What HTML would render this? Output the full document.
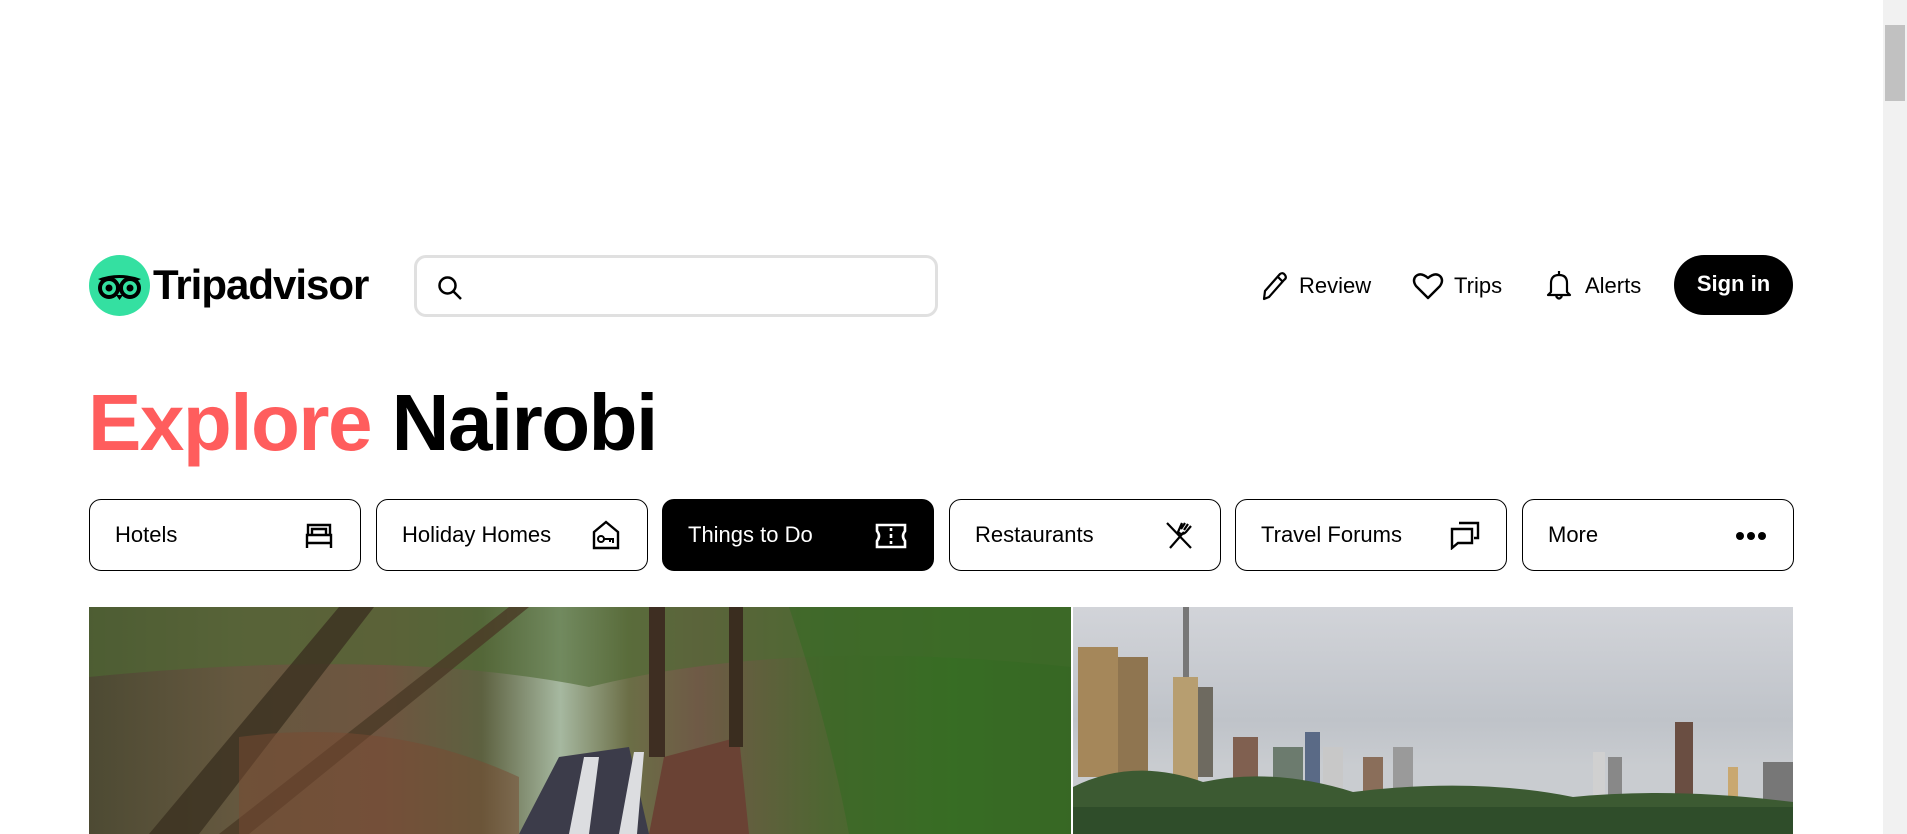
<!DOCTYPE html>
<html><head><meta charset="utf-8"><style>
*{box-sizing:border-box;margin:0;padding:0}
html,body{width:1907px;height:834px;overflow:hidden;background:#fff;font-family:"Liberation Sans",sans-serif;color:#000}
.abs{position:absolute}
.logo{left:89px;top:255px;width:61px;height:61px;border-radius:50%;background:#34e0a1}
.brand{left:153px;top:260px;font-size:42px;font-weight:bold;letter-spacing:-1px;line-height:50px}
.search{left:414px;top:255px;width:524px;height:62px;border:3px solid #e0e0e0;border-radius:12px}
.nav{top:272px;font-size:22px;line-height:28px}
.signin{left:1674px;top:255px;width:119px;height:60px;border-radius:30px;background:#000;color:#fff;font-size:22px;font-weight:bold;text-align:center;line-height:58px}
h1{position:absolute;left:88px;top:378px;font-size:80px;font-weight:bold;letter-spacing:-1.5px;line-height:90px}
h1 span{color:#ff5d5d}
.tab{top:499px;width:272px;height:72px;border:1px solid #000;border-radius:12px;font-size:22px;line-height:70px;padding-left:25px}
.tab svg{position:absolute;right:26px;top:23px}
.tab.on{background:#000;color:#fff}
.sb{left:1883px;top:0;width:24px;height:834px;background:#f1f1f1}
.th{left:1885px;top:25px;width:20px;height:76px;background:#c1c1c1}
</style></head><body>
<div class="abs logo">
<svg width="61" height="61" viewBox="0 0 61 61"><circle cx="20" cy="33" r="9" fill="none" stroke="#000" stroke-width="4"/><circle cx="41" cy="33" r="9" fill="none" stroke="#000" stroke-width="4"/><circle cx="20" cy="33" r="3.5"/><circle cx="41" cy="33" r="3.5"/><path d="M9 24 Q30 16 52 24 L48 26 Q30 20 13 26Z"/><path d="M27 40 L30.5 45 L34 40Z"/></svg>
</div>
<div class="abs brand">Tripadvisor</div>
<div class="abs search"><svg style="position:absolute;left:20px;top:17px" width="26" height="26" viewBox="0 0 26 26"><circle cx="10.5" cy="10.5" r="8" fill="none" stroke="#000" stroke-width="2.5"/><path d="M16.5 16.5L24 24" stroke="#000" stroke-width="2.5"/></svg></div>
<svg class="abs" style="left:1259px;top:270px" width="30" height="32" viewBox="0 0 30 32"><path d="M5 29 L6 21 L21 4 Q24 2 26 5 Q28 8 25 10 L10 27Z M19 7 L24 12" fill="none" stroke="#000" stroke-width="2.2" stroke-linejoin="round"/></svg>
<div class="abs nav" style="left:1299px">Review</div>
<svg class="abs" style="left:1412px;top:272px" width="32" height="28" viewBox="0 0 32 28"><path d="M16 26 L4 14 Q0 8 4 4 Q9 0 16 6 Q23 0 28 4 Q32 8 28 14Z" fill="none" stroke="#000" stroke-width="2.4" stroke-linejoin="round"/></svg>
<div class="abs nav" style="left:1454px">Trips</div>
<svg class="abs" style="left:1545px;top:268px" width="28" height="34" viewBox="0 0 28 34"><path d="M14 3 L14 6 M6 24 L6 15 Q6 7 14 7 Q22 7 22 15 L22 24 L25 27 L3 27Z M11 28 Q14 33 17 28" fill="none" stroke="#000" stroke-width="2.2" stroke-linejoin="round"/></svg>
<div class="abs nav" style="left:1585px">Alerts</div>
<div class="abs signin">Sign in</div>
<h1><span>Explore</span> Nairobi</h1>

<div class="abs tab" style="left:89px">Hotels<svg width="30" height="26" viewBox="0 0 30 26"><path d="M4 2 H26 V12 H4Z M3 12 H27 V20 H3Z M3 20 V25 M27 20 V25 M8 6 H22 V12 H8Z" fill="none" stroke="#000" stroke-width="2.4"/></svg></div>
<div class="abs tab" style="left:376px">Holiday Homes<svg width="30" height="30" viewBox="0 0 30 30" style="top:20px"><path d="M3 12 L15 2 L27 12 V28 H3Z" fill="none" stroke="#000" stroke-width="2.4"/><circle cx="10" cy="19" r="3" fill="none" stroke="#000" stroke-width="2"/><path d="M13 19 H22 V23 M19 19 V22" fill="none" stroke="#000" stroke-width="2"/></svg></div>
<div class="abs tab on" style="left:662px">Things to Do<svg width="32" height="26" viewBox="0 0 32 26"><path d="M2 2 H30 V8 Q26 13 30 18 V24 H2 V18 Q6 13 2 8Z" fill="none" stroke="#fff" stroke-width="2.6"/><path d="M16 5 V8 M16 11 V15 M16 18 V21" stroke="#fff" stroke-width="2.6"/></svg></div>
<div class="abs tab" style="left:949px">Restaurants<svg width="30" height="30" viewBox="0 0 30 30" style="top:20px"><path d="M3 3 L27 28 M6 28 L20 12 M18 3 L14 12 Q18 16 22 12 L27 6 M21 3 L17 9 M24 4 L20 10" fill="none" stroke="#000" stroke-width="2.2"/></svg></div>
<div class="abs tab" style="left:1235px">Travel Forums<svg width="30" height="30" viewBox="0 0 30 30" style="top:20px"><path d="M9 3 H28 V18 H24 M2 9 H22 V23 H8 L2 28Z" fill="none" stroke="#000" stroke-width="2.4"/></svg></div>
<div class="abs tab" style="left:1522px">More<svg width="32" height="10" viewBox="0 0 32 10" style="top:31px"><circle cx="5" cy="5" r="4"/><circle cx="16" cy="5" r="4"/><circle cx="27" cy="5" r="4"/></svg></div>

<div class="abs" style="left:89px;top:607px;width:982px;height:227px;overflow:hidden;background:linear-gradient(90deg,#4d4a33 0%,#65583f 15%,#6f5540 30%,#5d6140 40%,#a6b8a0 48%,#6b6e46 55%,#6f5a46 62%,#4f6632 75%,#3f6f28 88%,#3f6528 100%)">
<svg width="982" height="227" viewBox="0 0 982 227">
<path d="M0 0 H982 V60 Q700 30 500 80 Q300 40 0 70Z" fill="#4f6a33" opacity=".6"/>
<path d="M60 227 L250 0 L285 0 L110 227Z" fill="#3b3120" opacity=".8"/>
<path d="M130 227 L420 0 L440 0 L160 227Z" fill="#4a3a26" opacity=".8"/>
<path d="M430 227 L470 150 L540 140 L560 227Z" fill="#3c3c4a"/>
<path d="M480 227 L495 150 L510 150 L500 227Z M530 227 L545 145 L555 145 L548 227Z" fill="#dcdde0"/>
<path d="M560 227 L575 150 L650 130 L660 227Z" fill="#6a4234"/>
<path d="M150 130 Q300 110 430 170 L430 227 L150 227Z" fill="#7a4a32" opacity=".5"/>
<rect x="560" y="0" width="16" height="150" fill="#3e2e22"/>
<rect x="640" y="0" width="14" height="140" fill="#3a2d1f"/>
<path d="M700 0 H982 V227 H760 Q740 120 700 0Z" fill="#2f6a1e" opacity=".45"/>
</svg></div>

<div class="abs" style="left:1073px;top:607px;width:720px;height:227px;overflow:hidden;background:linear-gradient(180deg,#d2d4d9 0%,#bfc3c9 50%,#c9ccd0 70%)">
<svg width="720" height="227" viewBox="0 0 720 227">
<rect x="5" y="40" width="40" height="130" fill="#a5875a"/><rect x="45" y="50" width="30" height="120" fill="#8f7550"/>
<rect x="110" y="0" width="6" height="80" fill="#777"/><rect x="100" y="70" width="25" height="110" fill="#b79e70"/>
<rect x="125" y="80" width="15" height="90" fill="#6e6a60"/>
<rect x="160" y="130" width="25" height="50" fill="#806050"/>
<rect x="200" y="140" width="30" height="50" fill="#6c7b6e"/>
<rect x="232" y="125" width="15" height="70" fill="#5a6a86"/>
<rect x="250" y="140" width="20" height="60" fill="#c8c8c8"/>
<rect x="290" y="150" width="20" height="50" fill="#8a6e5a"/>
<rect x="320" y="140" width="20" height="60" fill="#9a9a9a"/>
<rect x="520" y="145" width="12" height="60" fill="#d0d0d0"/><rect x="535" y="150" width="14" height="55" fill="#888"/>
<rect x="602" y="115" width="18" height="95" fill="#6a4e42"/>
<rect x="655" y="160" width="10" height="50" fill="#c9a870"/>
<rect x="690" y="155" width="30" height="60" fill="#777"/>
<path d="M0 227 V180 Q60 150 130 175 Q200 160 280 185 Q400 170 500 190 Q600 180 720 195 V227Z" fill="#3c5a32"/>
<rect x="0" y="200" width="720" height="27" fill="#2f4d2a"/>
</svg></div>

<div class="abs sb"></div><div class="abs th"></div>
</body></html>
